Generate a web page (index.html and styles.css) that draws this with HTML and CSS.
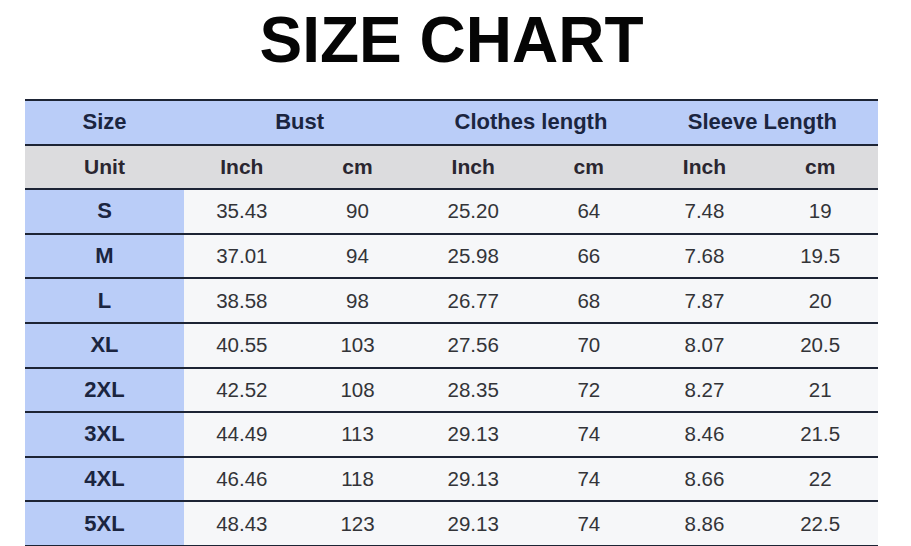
FILE: index.html
```html
<!DOCTYPE html>
<html lang="en">
<head>
<meta charset="utf-8">
<title>Size Chart</title>
<link rel="stylesheet" href="styles.css">
</head>
<body>
<main class="chart">
  <h1 class="title">SIZE CHART</h1>
  <table class="sizes">
    <colgroup>
      <col class="c-size">
      <col><col><col><col><col><col>
    </colgroup>
    <thead>
      <tr class="head">
        <th>Size</th>
        <th colspan="2">Bust</th>
        <th colspan="2">Clothes length</th>
        <th colspan="2">Sleeve Length</th>
      </tr>
      <tr class="unit">
        <th>Unit</th>
        <th>Inch</th><th>cm</th>
        <th>Inch</th><th>cm</th>
        <th>Inch</th><th>cm</th>
      </tr>
    </thead>
    <tbody>
      <tr><th>S</th><td>35.43</td><td>90</td><td>25.20</td><td>64</td><td>7.48</td><td>19</td></tr>
      <tr><th>M</th><td>37.01</td><td>94</td><td>25.98</td><td>66</td><td>7.68</td><td>19.5</td></tr>
      <tr><th>L</th><td>38.58</td><td>98</td><td>26.77</td><td>68</td><td>7.87</td><td>20</td></tr>
      <tr><th>XL</th><td>40.55</td><td>103</td><td>27.56</td><td>70</td><td>8.07</td><td>20.5</td></tr>
      <tr><th>2XL</th><td>42.52</td><td>108</td><td>28.35</td><td>72</td><td>8.27</td><td>21</td></tr>
      <tr><th>3XL</th><td>44.49</td><td>113</td><td>29.13</td><td>74</td><td>8.46</td><td>21.5</td></tr>
      <tr><th>4XL</th><td>46.46</td><td>118</td><td>29.13</td><td>74</td><td>8.66</td><td>22</td></tr>
      <tr><th>5XL</th><td>48.43</td><td>123</td><td>29.13</td><td>74</td><td>8.86</td><td>22.5</td></tr>
    </tbody>
  </table>
</main>
</body>
</html>
```

FILE: styles.css
```css
html, body {
  margin: 0;
  padding: 0;
  background: #ffffff;
}

body {
  font-family: "Liberation Sans", Arial, sans-serif;
}

.chart {
  width: 853px;
  margin: 0 0 0 25px;
  padding-top: 8px;
}

.title {
  margin: 0 0 27px 0;
  font-size: 64px;
  line-height: 64px;
  font-weight: 700;
  color: #050505;
  text-align: center;
  letter-spacing: 0;
}

.sizes {
  width: 853px;
  table-layout: fixed;
  border-collapse: collapse;
  border-bottom: 2px solid #1d2435;
}

.c-size {
  width: 159px;
}

.sizes tr {
  height: 44.6px;
  border-top: 2px solid #1d2435;
}

.sizes th,
.sizes td {
  padding: 0;
  text-align: center;
  vertical-align: middle;
}

.head th {
  background: #bacdf8;
  color: #1b2540;
  font-size: 22px;
  font-weight: 700;
}

.unit th {
  background: #dcdcde;
  color: #2a2630;
  font-size: 21px;
  font-weight: 700;
}

tbody th {
  background: #bacdf8;
  color: #1b2540;
  font-size: 22px;
  font-weight: 700;
}

tbody td {
  background: #f6f7f9;
  color: #333438;
  font-size: 20.5px;
  font-weight: 400;
}
```
